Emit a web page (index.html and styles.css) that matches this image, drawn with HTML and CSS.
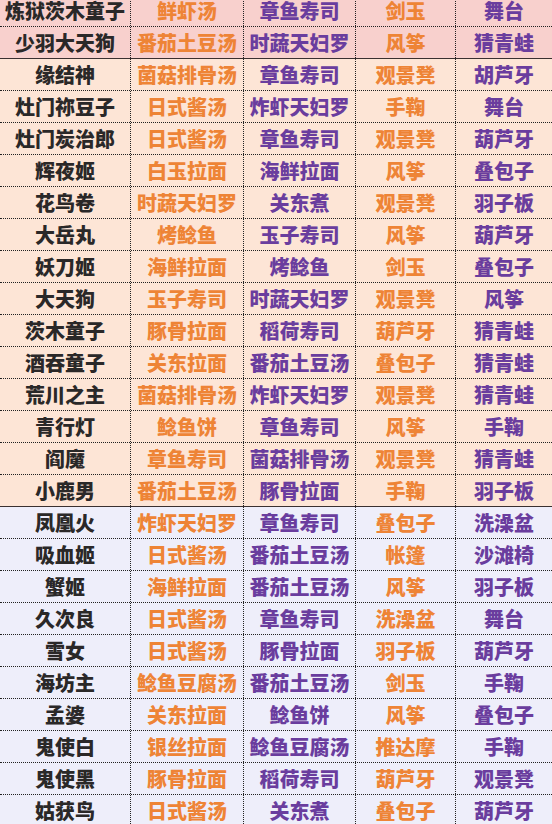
FILE: index.html
```html
<!DOCTYPE html>
<html lang="zh">
<head>
<meta charset="utf-8">
<link rel="stylesheet" href="styles.css">
</head>
<body>
<div class="table">
  <div class="row hl"><div class="c name">炼狱茨木童子</div><div class="c o">鲜虾汤</div><div class="c p">章鱼寿司</div><div class="c o">剑玉</div><div class="c p">舞台</div></div>
  <div class="row hl group-end"><div class="c name">少羽大天狗</div><div class="c o">番茄土豆汤</div><div class="c p">时蔬天妇罗</div><div class="c o">风筝</div><div class="c p">猜青蛙</div></div>
  <div class="row peach"><div class="c name">缘结神</div><div class="c o">菌菇排骨汤</div><div class="c p">章鱼寿司</div><div class="c o">观景凳</div><div class="c p">胡芦牙</div></div>
  <div class="row peach"><div class="c name">灶门祢豆子</div><div class="c o">日式酱汤</div><div class="c p">炸虾天妇罗</div><div class="c o">手鞠</div><div class="c p">舞台</div></div>
  <div class="row peach"><div class="c name">灶门炭治郎</div><div class="c o">日式酱汤</div><div class="c p">章鱼寿司</div><div class="c o">观景凳</div><div class="c p">葫芦牙</div></div>
  <div class="row peach"><div class="c name">辉夜姬</div><div class="c o">白玉拉面</div><div class="c p">海鲜拉面</div><div class="c o">风筝</div><div class="c p">叠包子</div></div>
  <div class="row peach"><div class="c name">花鸟卷</div><div class="c o">时蔬天妇罗</div><div class="c p">关东煮</div><div class="c o">观景凳</div><div class="c p">羽子板</div></div>
  <div class="row peach"><div class="c name">大岳丸</div><div class="c o">烤鲶鱼</div><div class="c p">玉子寿司</div><div class="c o">风筝</div><div class="c p">葫芦牙</div></div>
  <div class="row peach"><div class="c name">妖刀姬</div><div class="c o">海鲜拉面</div><div class="c p">烤鲶鱼</div><div class="c o">剑玉</div><div class="c p">叠包子</div></div>
  <div class="row peach"><div class="c name">大天狗</div><div class="c o">玉子寿司</div><div class="c p">时蔬天妇罗</div><div class="c o">观景凳</div><div class="c p">风筝</div></div>
  <div class="row peach"><div class="c name">茨木童子</div><div class="c o">豚骨拉面</div><div class="c p">稻荷寿司</div><div class="c o">葫芦牙</div><div class="c p">猜青蛙</div></div>
  <div class="row peach"><div class="c name">酒吞童子</div><div class="c o">关东拉面</div><div class="c p">番茄土豆汤</div><div class="c o">叠包子</div><div class="c p">猜青蛙</div></div>
  <div class="row peach"><div class="c name">荒川之主</div><div class="c o">菌菇排骨汤</div><div class="c p">炸虾天妇罗</div><div class="c o">观景凳</div><div class="c p">猜青蛙</div></div>
  <div class="row peach"><div class="c name">青行灯</div><div class="c o">鲶鱼饼</div><div class="c p">章鱼寿司</div><div class="c o">风筝</div><div class="c p">手鞠</div></div>
  <div class="row peach"><div class="c name">阎魔</div><div class="c o">章鱼寿司</div><div class="c p">菌菇排骨汤</div><div class="c o">观景凳</div><div class="c p">猜青蛙</div></div>
  <div class="row peach group-end"><div class="c name">小鹿男</div><div class="c o">番茄土豆汤</div><div class="c p">豚骨拉面</div><div class="c o">手鞠</div><div class="c p">羽子板</div></div>
  <div class="row lav"><div class="c name">凤凰火</div><div class="c o">炸虾天妇罗</div><div class="c p">章鱼寿司</div><div class="c o">叠包子</div><div class="c p">洗澡盆</div></div>
  <div class="row lav"><div class="c name">吸血姬</div><div class="c o">日式酱汤</div><div class="c p">番茄土豆汤</div><div class="c o">帐篷</div><div class="c p">沙滩椅</div></div>
  <div class="row lav"><div class="c name">蟹姬</div><div class="c o">海鲜拉面</div><div class="c p">番茄土豆汤</div><div class="c o">风筝</div><div class="c p">羽子板</div></div>
  <div class="row lav"><div class="c name">久次良</div><div class="c o">日式酱汤</div><div class="c p">章鱼寿司</div><div class="c o">洗澡盆</div><div class="c p">舞台</div></div>
  <div class="row lav"><div class="c name">雪女</div><div class="c o">日式酱汤</div><div class="c p">豚骨拉面</div><div class="c o">羽子板</div><div class="c p">葫芦牙</div></div>
  <div class="row lav"><div class="c name">海坊主</div><div class="c o">鲶鱼豆腐汤</div><div class="c p">番茄土豆汤</div><div class="c o">剑玉</div><div class="c p">手鞠</div></div>
  <div class="row lav"><div class="c name">孟婆</div><div class="c o">关东拉面</div><div class="c p">鲶鱼饼</div><div class="c o">风筝</div><div class="c p">叠包子</div></div>
  <div class="row lav"><div class="c name">鬼使白</div><div class="c o">银丝拉面</div><div class="c p">鲶鱼豆腐汤</div><div class="c o">推达摩</div><div class="c p">手鞠</div></div>
  <div class="row lav"><div class="c name">鬼使黑</div><div class="c o">豚骨拉面</div><div class="c p">稻荷寿司</div><div class="c o">葫芦牙</div><div class="c p">观景凳</div></div>
  <div class="row lav"><div class="c name">姑获鸟</div><div class="c o">日式酱汤</div><div class="c p">关东煮</div><div class="c o">叠包子</div><div class="c p">葫芦牙</div></div>
</div>
</body>
</html>
```
FILE: styles.css
```css
html, body {
  margin: 0;
  padding: 0;
  background: #ffffff;
}
body {
  width: 552px;
  height: 824px;
  overflow: hidden;
  font-family: "Noto Sans CJK SC", "Noto Sans", sans-serif;
}
.table {
  margin-top: -5px;
  display: flex;
  flex-direction: column;
}
.row {
  display: grid;
  grid-template-columns: 131px 113px 112px 100px 96px;
  height: 32px;
  box-sizing: border-box;
  border-bottom: 1px dotted #222;
}
.row.group-end {
  border-bottom: 1px solid #3a3030;
}
.hl { background: #f8d0cd; }
.peach { background: #fde5d6; }
.lav { background: #eeeefa; }
.c {
  box-sizing: border-box;
  border-right: 1px dotted #222;
  display: flex;
  align-items: center;
  justify-content: center;
  font-size: 20px;
  font-weight: 900;
  line-height: 1;
  white-space: nowrap;
}
.c:last-child { border-right: none; }
.name { color: #2a2828; }
.o { color: #ee8436; }
.p { color: #6a3d9e; }
```
